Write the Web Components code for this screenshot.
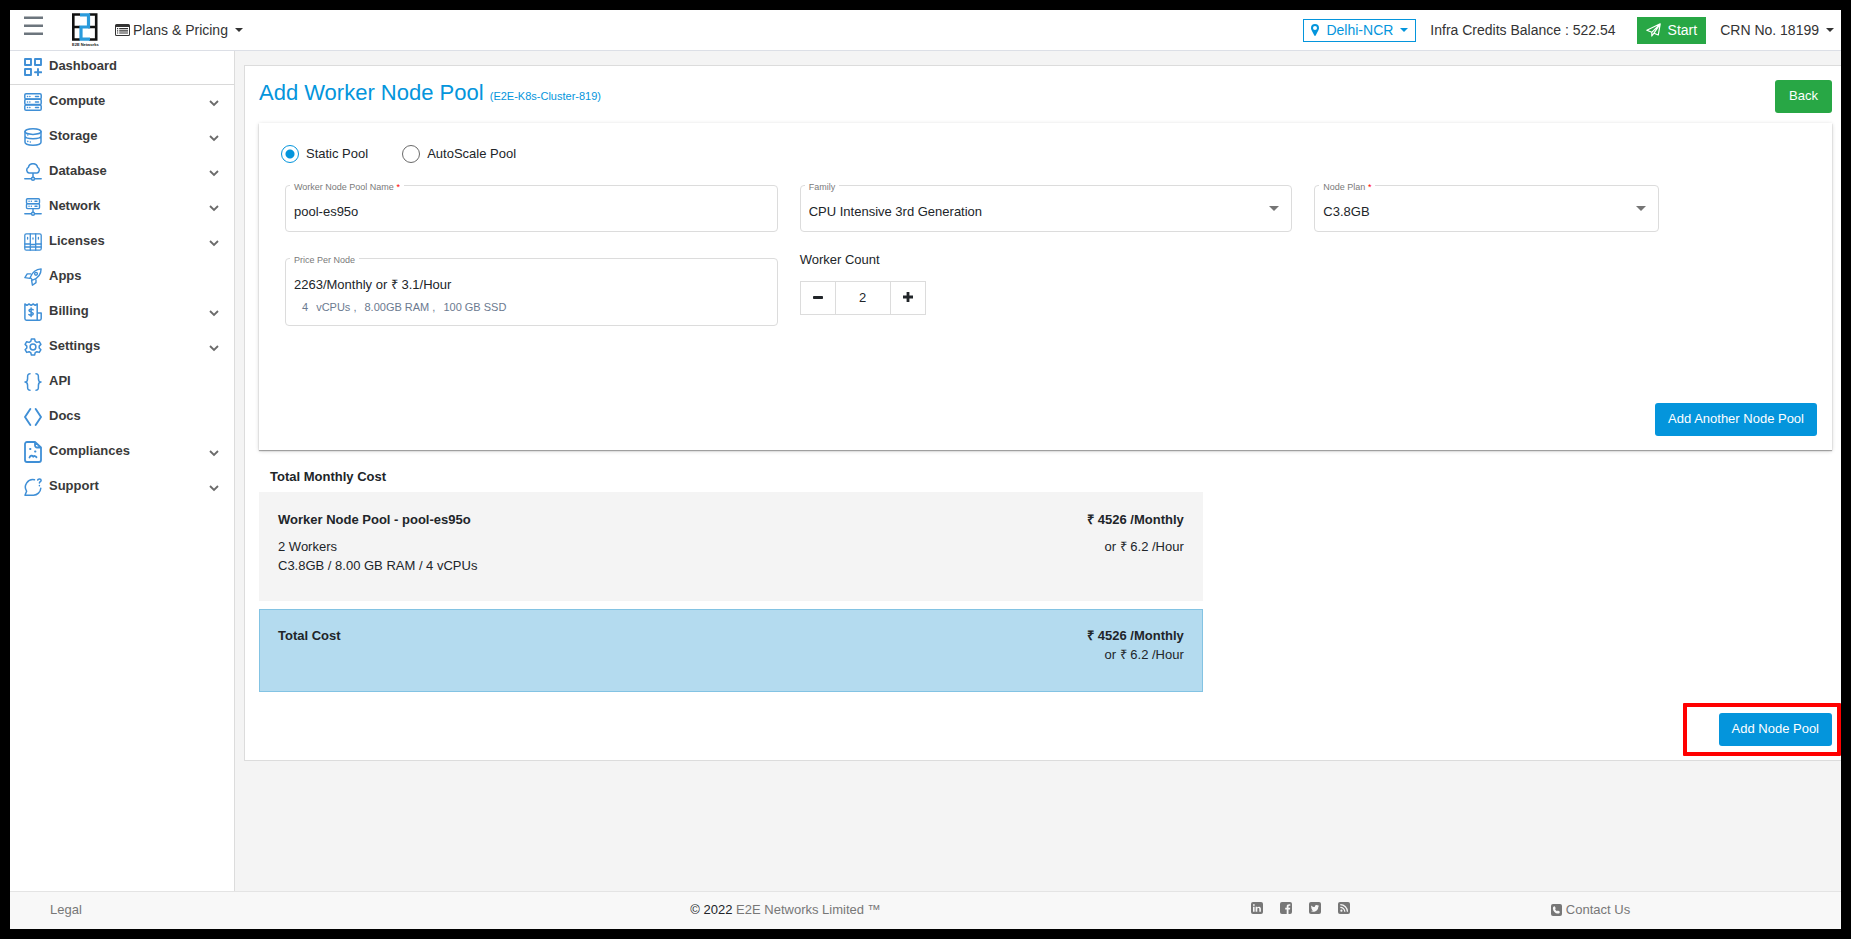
<!DOCTYPE html>
<html lang="en">
<head>
<meta charset="utf-8">
<title>Add Worker Node Pool</title>
<style>
  body { margin: 0; background: #000; font: 13px/18px "Liberation Sans", Arial, sans-serif; color: #212529; }
</style>
</head>
<body>
<app-shell>
  <app-header slot="header"></app-header>
  <side-nav slot="nav">
    <nav-item icon="dashboard" divided>Dashboard</nav-item>
    <nav-item icon="compute" expandable>Compute</nav-item>
    <nav-item icon="storage" expandable>Storage</nav-item>
    <nav-item icon="database" expandable>Database</nav-item>
    <nav-item icon="network" expandable>Network</nav-item>
    <nav-item icon="licenses" expandable>Licenses</nav-item>
    <nav-item icon="apps">Apps</nav-item>
    <nav-item icon="billing" expandable>Billing</nav-item>
    <nav-item icon="settings" expandable>Settings</nav-item>
    <nav-item icon="api">API</nav-item>
    <nav-item icon="docs">Docs</nav-item>
    <nav-item icon="compliances" expandable>Compliances</nav-item>
    <nav-item icon="support" expandable>Support</nav-item>
  </side-nav>
  <worker-pool-page></worker-pool-page>
  <app-footer slot="footer"></app-footer>
</app-shell>

<script>
const define = (name, html, setup) => {
  const template = document.createElement('template');
  template.innerHTML = html;
  customElements.define(name, class extends HTMLElement {
    constructor() {
      super();
      this.attachShadow({ mode: 'open' }).append(template.content.cloneNode(true));
    }
    connectedCallback() {
      if (setup && !this.ready) { this.ready = true; setup(this, this.shadowRoot); }
    }
  });
};

/* ---------- icons ---------- */
const line = (body, w = 1.5) => `<g fill="none" stroke="currentColor" stroke-width="${w}" stroke-linecap="round" stroke-linejoin="round">${body}</g>`;
const ICONS = {
  menu: [19, 20, '<path d="M0 .6h19V3H0zM0 8.600h19V11H0zM0 16.600h19V19H0z" fill="currentColor"/>'],
  caret: [8, 4, '<path d="M0 0h8L4 4z" fill="currentColor"/>'],
  arrow: [10, 5, '<path d="M0 0h10L5 5z" fill="currentColor"/>'],
  chevron: [10, 7, '<path d="M1 1l4 4 4-4" fill="none" stroke="currentColor" stroke-width="1.800"/>'],
  plans: [15, 12, '<path fill-rule="evenodd" fill="currentColor" d="M1.500 0h12A1.500 1.500 0 0 1 15 1.500v9a1.500 1.500 0 0 1-1.500 1.500h-12A1.500 1.500 0 0 1 0 10.500v-9A1.500 1.500 0 0 1 1.500 0zM1 3v7.500c0 .3.200.5.500.5h12c.3 0 .5-.2.500-.5V3z"/><path fill="currentColor" d="M2 4h1.200v1.200H2zM2 6.200h1.200v1.200H2zM2 8.400h1.200v1.200H2zM4.200 4H13v1.200H4.200zM4.200 6.200H13v1.200H4.200zM4.200 8.400H13v1.200H4.200z"/>'],
  marker: [8, 12, '<path fill-rule="evenodd" fill="currentColor" d="M4 0a4 4 0 0 1 4 4c0 1-.3 1.500-.6 2.200L4.700 11.500a.8.8 0 0 1-1.400 0L.6 6.200C.3 5.500 0 5 0 4a4 4 0 0 1 4-4zm0 2a2 2 0 1 0 0 4 2 2 0 0 0 0-4z"/>'],
  plane: [15, 14, '<path d="M14.200.8L12.300 12 8 10.200 5.800 13V9.300L.8 7.300zM14.200.8L5.800 9.300M14.200.8L8 10.200" fill="none" stroke="currentColor" stroke-width="1.200" stroke-linejoin="round"/>'],
  minus: [10, 3, '<rect width="10" height="3" rx=".8" fill="currentColor"/>'],
  plus: [10, 10, '<path d="M3.600 0h2.800v3.600H10v2.800H6.400V10H3.600V6.400H0V3.600h3.600z" fill="currentColor"/>'],
  dashboard: [18, 18, line('<rect x="1" y="1" width="6" height="6"/><rect x="11" y="1" width="6" height="6"/><rect x="1" y="11" width="6" height="6"/><path d="M14 11v6.300M11 14.200h6.300"/>', 1.9)],
  compute: [18, 18, line('<rect x=".8" y=".8" width="16.400" height="5.200" rx="1.300"/><rect x=".8" y="6.200" width="16.400" height="5.400" rx="1.300"/><rect x=".8" y="12" width="16.400" height="5.200" rx="1.300"/><path d="M3.500 3.400h.1M5.800 3.400h.1M11.500 3.400h3M3.500 9h.1M5.800 9h.1M11.500 9h3M3.500 14.600h.1M5.800 14.600h.1M11.500 14.600h3"/>', 1.5)],
  storage: [18, 18, line('<ellipse cx="9" cy="3.600" rx="8" ry="2.800"/><path d="M1 3.600v10.700c0 1.600 3.600 2.900 8 2.900s8-1.300 8-2.900V3.600M1 8c0 1.600 3.600 2.700 8 2.700s8-1.100 8-2.700M3.800 7v.1M3.800 13.300v.1M6.300 14v.1"/>', 1.5)],
  database: [18, 18, line('<path d="M5 10a3 3 0 0 1-.6-5.600 4.700 4.700 0 0 1 9.200 0A3 3 0 0 1 13 10zM9 10v4M.8 15.700h6.200M11 15.700h6.200"/><circle cx="9" cy="15.700" r="1.500"/>', 1.5)],
  network: [18, 18, line('<rect x="2.500" y=".8" width="13" height="4.800" rx="1"/><rect x="2.500" y="5.800" width="13" height="4.800" rx="1"/><path d="M5 3.200h.1M7.300 3.200h.1M11 3.200h2M5 8.200h.1M7.300 8.200h.1M11 8.200h2M9 10.700V14M.8 15.700h6.200M11 15.700h6.200"/><circle cx="9" cy="15.700" r="1.500"/>', 1.4)],
  licenses: [18, 18, line('<rect x=".8" y=".8" width="16.400" height="16.400" rx="1.500"/><path d="M6.300.8v16.400M11.700.8v16.400M.8 11h5.500M11.700 11h5.500M.8 14h16.400M6.300 11.500h5.400M3.600 4.500v1.500M9 5v1M14.400 4.500v1.500"/>', 1.3)],
  apps: [18, 18, line('<path d="M6.200 9.400C8 5 11.500 1.200 17.100.9c0 5.600-4 9.500-8.500 11.200zM6.600 5.900H3.200L.9 9.600l4.900.8M12 11.400v3.200l-3.600 2.600-.8-4.900"/><circle cx="12" cy="5.800" r="1.400"/>', 1.4)],
  billing: [18, 18, line('<path d="M13.200 17.200H2.500A1.600 1.600 0 0 1 .9 15.600V1l2 1.300L5 1l2.100 1.300L9.200 1l2 1.300 2-1.300zM13.200 10h4v5.600a1.600 1.600 0 0 1-1.600 1.600h-2.400M9.200 6.800C8.700 6 5 5.700 5 7.600c0 2 4.300 1.200 4.300 3.200 0 1.900-3.600 1.700-4.400.8M7.100 5v8.400"/>', 1.5)],
  settings: [18, 18, line('<path d="M7.400 1h3.200l.6 2.400 1.700 1 2.400-.7 1.600 2.700-1.700 1.700v1.900l1.700 1.700-1.600 2.700-2.400-.7-1.700 1-.6 2.400H7.400l-.6-2.400-1.700-1-2.400.7-1.600-2.700L2.800 10V8.100L1.100 6.400l1.600-2.700 2.400.7 1.700-1z"/><circle cx="9" cy="9" r="2.900"/>', 1.5)],
  api: [18, 18, line('<path d="M6 .8C3.200.8 3.600 3 3.600 5.500S3 9 1 9c2 0 2.600 1 2.600 3.500S3.200 17.200 6 17.200M12 .8c2.800 0 2.400 2.200 2.400 4.700S15 9 17 9c-2 0-2.600 1-2.600 3.500s.4 4.700-2.400 4.700"/>', 1.5)],
  docs: [18, 18, line('<path d="M6.300 1L1 9l5.300 8M11.700 1L17 9l-5.300 8"/>', 1.9)],
  compliances: [18, 22, line('<path d="M11 1H3a2 2 0 0 0-2 2v16a2 2 0 0 0 2 2h12a2 2 0 0 0 2-2V6.500zM11 1v3.500a2 2 0 0 0 2 2h4M6 8h.5M11 10.500h.5M5.500 16.500c.7-2 2.600-2.400 3.700-.8.800-1 2.400-1 3.300.6"/>', 1.8)],
  support: [18, 18, line('<path d="M10.500 1.800A7.500 7.500 0 0 0 2.600 13.200L1 17.200h8.500a7.500 7.500 0 0 0 7.300-6.900M13.700 2c.3-1.600 3.500-1.500 3.400.4 0 1.300-1.700 1.300-1.700 2.700M15.400 7.600v.1"/>', 1.5)],
  linkedin: [12, 12, '<rect width="12" height="12" rx="2" fill="currentColor"/><path fill="#f8f8f8" d="M2 4.700h1.600v5H2zM2 2.300h1.700v1.500H2zM4.600 4.700h1.600v.7c.9-1.200 3.700-1.100 3.700 1.300v3H8.300V7c0-1.300-2-1.300-2 0v2.700H4.600z"/>'],
  facebook: [12, 12, '<rect width="12" height="12" rx="2" fill="currentColor"/><path fill="#f8f8f8" d="M6.700 12V7.500H5.200V5.800h1.500V4.500c0-1.700 1-2.500 3.600-2.200v1.500c-1.300 0-1.800 0-1.800.9v1.100h1.700L10 7.500H8.500V12z"/>'],
  twitter: [12, 12, '<rect width="12" height="12" rx="2" fill="currentColor"/><path fill="#f8f8f8" d="M10.200 3.800l-.9.9c0 4.400-4.600 6-7.500 4.300 1 0 1.800-.2 2.400-.7-.8 0-1.300-.5-1.500-1.100h.7C2.600 6.900 2.100 6.300 2.100 5.500l.7.200C2.100 5.100 2 4.200 2.300 3.400c.9 1.100 2.100 1.700 3.500 1.700C5.500 3.400 7.500 2.300 8.700 3.500l1-.4-.6.900z"/>'],
  rss: [12, 12, '<rect width="12" height="12" rx="2" fill="currentColor"/><circle cx="3.400" cy="8.700" r="1.100" fill="#f8f8f8"/><path d="M2.300 5.300a4.500 4.500 0 0 1 4.500 4.500M2.300 2.600a7.200 7.200 0 0 1 7.200 7.200" fill="none" stroke="#f8f8f8" stroke-width="1.200"/>'],
  phone: [11, 12, '<rect width="11" height="12" rx="2" fill="currentColor"/><path fill="#f8f8f8" d="M3.700 2.300l1.100 1.900-.8.9c.4 1 1 1.700 2 2.200l.9-.8 2 1.200c-.1 1.300-1 2-2.200 1.900C4.300 9.300 2 7.200 1.900 4.400 1.900 3.200 2.700 2.300 3.700 2.300z"/>'],
  logo: [28, 34, `<g fill="none" stroke-width="2.600"><path stroke="#111" d="M9 1.500H2.300v25H9M18 1.500h7.200v25H18M2.300 14H9M17 14h8"/><path stroke="#2a9bdc" stroke-width="3.200" d="M9 1.800h8.500V14H10v12.200h9"/></g><text x="1" y="33" font-size="4" font-weight="bold" fill="#222" font-family="Liberation Sans, Arial, sans-serif">E2E Networks</text>`]
};
define('ui-icon', `<style>:host{display:inline-flex;flex:none}svg{display:block}</style>`, (host, root) => {
  const [w, h, body] = ICONS[host.getAttribute('name')];
  root.innerHTML += `<svg width="${w}" height="${h}" viewBox="0 0 ${w} ${h}" aria-hidden="true">${body}</svg>`;
});

/* ---------- shell ---------- */
define('app-shell', `
<style>
  :host { display: flex; flex-direction: column; min-height: 100vh; box-sizing: border-box; border: 10px solid #000; background: #f4f4f4; }
  .middle { display: flex; flex: 1; }
  main { flex: 1; min-width: 0; padding: 14px 0 14px 9px; }
</style>
<slot name="header"></slot>
<div class="middle"><slot name="nav"></slot><main><slot></slot></main></div>
<slot name="footer"></slot>`);

define('app-header', `
<style>
  :host { display: block; background: #fff; border-bottom: 1px solid #dcdfe6; font-size: 14px; color: #333; }
  header { display: flex; align-items: center; height: 40px; padding: 0 7px 0 14px; }
  button { display: inline-flex; align-items: center; font: inherit; color: inherit; background: none; border: 0; padding: 0; cursor: pointer; white-space: nowrap; }
  .menu { align-self: flex-start; margin: 6px 28px 0 0; color: #6c757d; }
  .logo { display: flex; margin-right: 16px; }
  .plans ui-icon:first-child { margin-right: 3px; }
  .plans ui-icon:last-child, .crn ui-icon { margin-left: 7px; }
  .region { margin-left: auto; gap: 7px; height: 23px; padding: 0 7px; border: 1px solid #0495dc; color: #0495dc; }
  .balance { margin: 0 21px 0 14px; white-space: nowrap; }
  .start { height: 27px; padding: 0 9px; gap: 7px; background: #28a745; color: #fff; margin-right: 14px; }
</style>
<header>
  <button class="menu" aria-label="Toggle menu"><ui-icon name="menu"></ui-icon></button>
  <a class="logo" href="#" aria-label="E2E Networks"><ui-icon name="logo"></ui-icon></a>
  <button class="plans"><ui-icon name="plans"></ui-icon>Plans &amp; Pricing<ui-icon name="caret"></ui-icon></button>
  <button class="region"><ui-icon name="marker"></ui-icon>Delhi-NCR<ui-icon name="caret"></ui-icon></button>
  <span class="balance">Infra Credits Balance : 522.54</span>
  <button class="start"><ui-icon name="plane"></ui-icon>Start</button>
  <button class="crn">CRN No. 18199<ui-icon name="caret"></ui-icon></button>
</header>`);

define('side-nav', `
<style>
  :host { display: block; flex: none; width: 224px; background: #fff; border-right: 1px solid #dcdcdc; }
</style>
<nav aria-label="Main"><slot></slot></nav>`);

define('nav-item', `
<style>
  :host { display: block; }
  :host([divided]) { border-bottom: 1px solid #d9d9d9; }
  a { display: flex; align-items: center; height: 35px; padding: 0 15px 0 14px; color: #3a3a3a; font-weight: bold; text-decoration: none; }
  :host([divided]) a { height: 33px; }
  .icon { color: #3f8fd6; margin-right: 7px; padding-bottom: 2px; }
  span { flex: 1; padding-bottom: 3px; }
  .chevron { display: none; color: #6b6b6b; padding-top: 2px; }
  :host([expandable]) .chevron { display: flex; }
</style>
<a href="#"><span><slot></slot></span><ui-icon class="chevron" name="chevron"></ui-icon></a>`,
(host, root) => {
  const icon = document.createElement('ui-icon');
  icon.className = 'icon';
  icon.setAttribute('name', host.getAttribute('icon'));
  root.querySelector('a').prepend(icon);
});

/* ---------- controls ---------- */
define('ui-button', `
<style>
  :host { display: inline-block; }
  button { height: 33px; padding: 0 13px 1px; border: 0; border-radius: 3px; background: #0495dc; color: #fff; font: inherit; white-space: nowrap; cursor: pointer; }
  :host([tone="success"]) button { background: #28a745; padding: 0 14px 1px; }
</style>
<button type="button"><slot></slot></button>`);

define('outlined-field', `
<style>
  :host { display: block; position: relative; border: 1px solid #dcdcdc; border-radius: 4px; box-sizing: border-box; min-width: 0; }
  label { position: absolute; top: -5px; left: 4px; padding: 0 4px; background: #fff; font-size: 9px; line-height: 12px; color: #7a7a7a; }
  label b { display: none; font-weight: normal; color: #f00; }
  :host([required]) label b { display: inline; }
  input, select { display: block; width: 100%; height: 45px; box-sizing: border-box; padding: 7px 8px 0; border: 0; border-radius: 4px; outline: 0; background: none; appearance: none; font: inherit; color: inherit; }
  input { padding-top: 5px; }
  output { display: block; padding: 17px 8px 9px; }
  ui-icon { position: absolute; right: 12px; top: 20px; color: #757575; pointer-events: none; }
</style>
<label for="control"><span></span> <b>*</b></label>`,
(host, root) => {
  root.querySelector('label span').textContent = host.getAttribute('label');
  const kind = host.getAttribute('kind');
  const control = document.createElement(kind);
  control.id = 'control';
  if (kind === 'input') control.value = host.getAttribute('value');
  if (kind === 'select') control.add(new Option(host.getAttribute('value')));
  if (kind === 'output') control.append(document.createElement('slot'));
  root.append(control);
  if (kind === 'select') {
    const arrow = document.createElement('ui-icon');
    arrow.setAttribute('name', 'arrow');
    root.append(arrow);
  }
});

define('count-stepper', `
<style>
  :host { display: block; }
  label { display: block; }
  .box { display: inline-grid; grid-template-columns: 34px 54px 34px; gap: 1px; height: 32px; margin-top: 12px; border: 1px solid #dcdcdc; background: #dcdcdc; }
  button, input { border: 0; padding: 0; margin: 0; background: #fff; color: #212529; font: inherit; text-align: center; min-width: 0; border-radius: 0; }
  button { display: flex; align-items: center; justify-content: center; padding-bottom: 2px; cursor: pointer; }
</style>
<label for="count">Worker Count</label>
<div class="box">
  <button type="button" aria-label="Decrease"><ui-icon name="minus"></ui-icon></button>
  <input id="count" value="2" inputmode="numeric">
  <button type="button" aria-label="Increase"><ui-icon name="plus"></ui-icon></button>
</div>`,
(host, root) => {
  const input = root.querySelector('input');
  const [minus, plus] = root.querySelectorAll('button');
  minus.onclick = () => { input.value = Math.max(1, input.value - 1); };
  plus.onclick = () => { input.value = +input.value + 1; };
});

define('pool-form', `
<style>
  :host { display: block; background: #fff; padding: 22px 3px 14px 26px; box-shadow: 0 1px 1px rgba(0,0,0,.3), 0 1px 4px rgba(0,0,0,.18); }
  .modes { display: flex; gap: 34px; margin-left: -4px; }
  .modes label { display: flex; align-items: center; gap: 7px; }
  input { appearance: none; margin: 0; width: 18px; height: 18px; border: 1px solid #6a6a6a; border-radius: 50%; }
  input:checked { border-color: #0495dc; background: radial-gradient(circle, #0495dc 4px, transparent 5px); }
  .grid { display: grid; grid-template-columns: 10fr 10fr 7fr 3fr; column-gap: 22px; row-gap: 26px; align-items: start; margin-top: 22px; }
  .price { grid-column: 1; }
  .spec { display: flex; gap: 8px; padding-left: 8px; margin-top: 4px; font-size: 11px; color: #6b7a90; }
  count-stepper { margin-top: -7px; }
  .actions { display: flex; justify-content: flex-end; margin: 77px 12px 0 0; }
</style>
<div class="modes" role="radiogroup" aria-label="Pool type">
  <label><input type="radio" name="mode" checked>Static Pool</label>
  <label><input type="radio" name="mode">AutoScale Pool</label>
</div>
<div class="grid">
  <outlined-field kind="input" label="Worker Node Pool Name" value="pool-es95o" required></outlined-field>
  <outlined-field kind="select" label="Family" value="CPU Intensive 3rd Generation"></outlined-field>
  <outlined-field kind="select" label="Node Plan" value="C3.8GB" required></outlined-field>
  <outlined-field class="price" kind="output" label="Price Per Node">2263/Monthly or ₹ 3.1/Hour
    <div class="spec"><span>4</span><span>vCPUs ,</span><span>8.00GB RAM ,</span><span>100 GB SSD</span></div>
  </outlined-field>
  <count-stepper></count-stepper>
</div>
<div class="actions"><ui-button>Add Another Node Pool</ui-button></div>`);

define('cost-row', `
<style>
  :host { display: flex; justify-content: space-between; box-sizing: border-box; padding: 18px 18px 25px; border: 1px solid #f4f4f4; background: #f4f4f4; }
  :host([total]) { border-color: #83c3e3; background: #b4dbef; padding: 17px 18px 27px; }
  .price { text-align: right; }
</style>
<div><slot></slot></div>
<div class="price"><slot name="price"></slot></div>`);

define('cost-lines', `
<style>
  :host { display: block; }
  ::slotted(strong) { display: block; margin-bottom: var(--title-gap, 8px); }
  ::slotted(div) { line-height: 19px; }
</style>
<slot></slot>`);

define('worker-pool-page', `
<style>
  :host { display: block; background: #fff; border: 1px solid #dcdcdc; border-right: 0; padding: 14px 9px 14px 14px; }
  .title { display: flex; justify-content: space-between; align-items: flex-start; margin-bottom: 10px; }
  h1 { margin: 0; font-size: 22px; line-height: 26px; font-weight: normal; color: #0495dc; }
  h1 small { font-size: 11px; }
  h2 { margin: 18px 0 6px 11px; font-size: 13px; line-height: 18px; }
  .costs { width: 60%; }
  cost-row + cost-row { margin-top: 8px; --title-gap: 0px; }
  .actions { display: flex; justify-content: flex-end; margin-top: 21px; }
  .highlight { position: relative; display: flex; }
  .highlight::before { content: ""; position: absolute; inset: -10px -9px -10px -36px; border: 4px solid #f00; border-radius: 1px; pointer-events: none; }
</style>
<div class="title">
  <h1>Add Worker Node Pool <small>(E2E-K8s-Cluster-819)</small></h1>
  <ui-button tone="success">Back</ui-button>
</div>
<pool-form></pool-form>
<h2>Total Monthly Cost</h2>
<div class="costs">
  <cost-row>
    <cost-lines><strong>Worker Node Pool - pool-es95o</strong><div>2 Workers</div><div>C3.8GB / 8.00 GB RAM / 4 vCPUs</div></cost-lines>
    <cost-lines slot="price"><strong>₹ 4526 /Monthly</strong><div>or ₹ 6.2 /Hour</div></cost-lines>
  </cost-row>
  <cost-row total>
    <cost-lines><strong>Total Cost</strong></cost-lines>
    <cost-lines slot="price"><strong>₹ 4526 /Monthly</strong><div>or ₹ 6.2 /Hour</div></cost-lines>
  </cost-row>
</div>
<div class="actions"><div class="highlight"><ui-button>Add Node Pool</ui-button></div></div>`);

define('app-footer', `
<style>
  :host { display: block; background: #f8f8f8; border-top: 1px solid #e4e4e4; color: #777; }
  footer { display: grid; grid-template-columns: 32fr 28fr 15fr 14fr; align-items: center; height: 35px; padding: 0 10px 2px 40px; }
  a { color: inherit; text-decoration: none; }
  .year { color: #212529; }
  .social { display: flex; gap: 17px; }
  .contact { display: flex; align-items: center; gap: 4px; }
</style>
<footer>
  <a href="#">Legal</a>
  <span><span class="year">© 2022</span> <a href="#">E2E Networks Limited ™</a></span>
  <span class="social">
    <a href="#" aria-label="LinkedIn"><ui-icon name="linkedin"></ui-icon></a>
    <a href="#" aria-label="Facebook"><ui-icon name="facebook"></ui-icon></a>
    <a href="#" aria-label="Twitter"><ui-icon name="twitter"></ui-icon></a>
    <a href="#" aria-label="RSS"><ui-icon name="rss"></ui-icon></a>
  </span>
  <a class="contact" href="#"><ui-icon name="phone"></ui-icon>Contact Us</a>
</footer>`);
</script>
</body>
</html>
